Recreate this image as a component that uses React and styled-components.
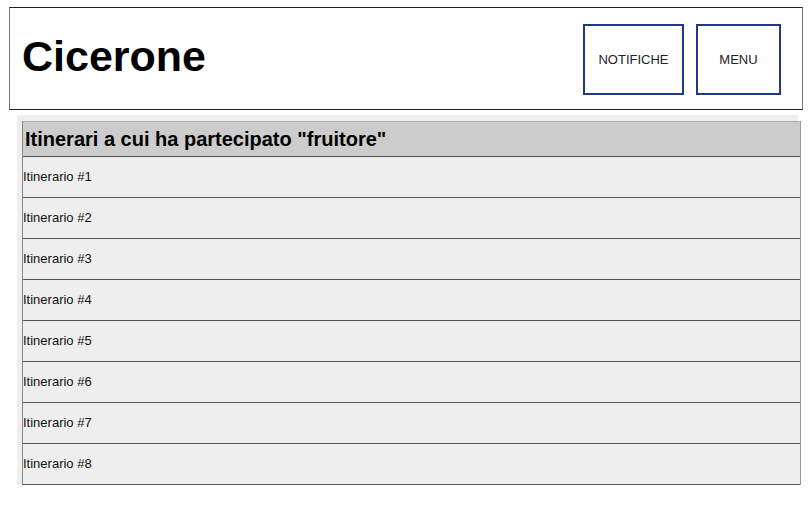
import styled, { createGlobalStyle } from "styled-components";

const GlobalStyle = createGlobalStyle`
  body {
    margin: 0;
    background: #fff;
    font-family: "Liberation Sans", Arial, sans-serif;
  }
`;

const itinerari = [1, 2, 3, 4, 5, 6, 7, 8];

export default function App() {
  return (
    <>
      <GlobalStyle />
      <Header>
        <Logo>Cicerone</Logo>
        <Azioni>
          <Bottone $w={101}>NOTIFICHE</Bottone>
          <Bottone $w={85}>MENU</Bottone>
        </Azioni>
      </Header>
      <Sezione>
        <Tabella>
          <Titolo>Itinerari a cui ha partecipato "fruitore"</Titolo>
          {itinerari.map((n) => (
            <Riga key={n}>Itinerario #{n}</Riga>
          ))}
        </Tabella>
      </Sezione>
    </>
  );
}

const Header = styled.header`
  box-sizing: border-box;
  width: 794px;
  height: 103px;
  margin: 7px 0 0 9px;
  border: 1px solid #222;
  border-left-color: #777;
  border-right-color: #777;
  display: flex;
  align-items: center;
  justify-content: space-between;
  padding: 1px 21px 0 12px;
`;

const Logo = styled.h1`
  margin: 0 0 6px;
  font-size: 43px;
  font-weight: bold;
  color: #000;
`;

const Azioni = styled.div`
  display: flex;
  gap: 12px;
`;

const Bottone = styled.button`
  box-sizing: border-box;
  width: ${(p) => p.$w}px;
  height: 71px;
  border: 2px solid #1f3a7e;
  background: #fff;
  font-family: "Liberation Sans", Arial, sans-serif;
  font-size: 13px;
  color: #222;
  padding: 0;
  cursor: pointer;
`;

const Sezione = styled.section`
  box-sizing: border-box;
  width: 781px;
  margin: 5px 0 0 17px;
  padding: 6px 0 0 5px;
  background: #eee;
`;

const Tabella = styled.div`
  width: 779px;
  box-sizing: border-box;
  border-left: 1px solid #888;
  border-right: 1px solid #999;
  background: #eee;
`;

const Titolo = styled.div`
  height: 36px;
  box-sizing: border-box;
  border-top: 1px solid #aaa;
  border-bottom: 1px solid #555;
  background: #ccc;
  display: flex;
  align-items: center;
  padding-left: 2px;
  font-size: 20px;
  font-weight: bold;
  color: #000;
`;

const Riga = styled.div`
  height: 41px;
  box-sizing: border-box;
  border-bottom: 1px solid #555;
  display: flex;
  align-items: center;
  padding-bottom: 2px;
  font-size: 13px;
  color: #111;
`;
